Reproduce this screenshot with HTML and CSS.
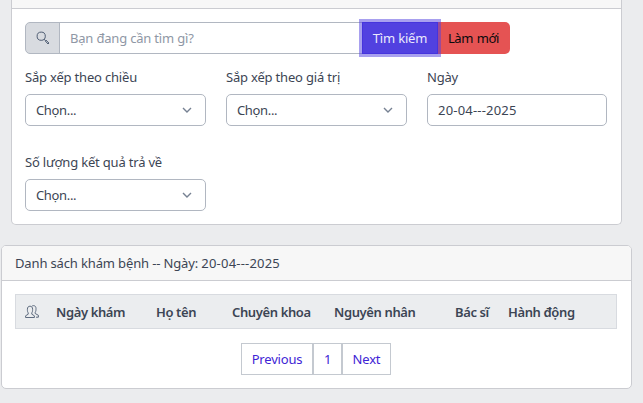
FILE: index.html
```html
<!DOCTYPE html>
<html lang="vi">
<head>
<meta charset="utf-8">
<title>Danh sách khám bệnh</title>
<link rel="stylesheet" href="styles.css">
</head>
<body>
<section class="card filter-card">
  <div class="card-header filter-header"></div>
  <form class="filter-body">
    <div class="search-group">
      <span class="search-addon">
        <svg width="14" height="14" viewBox="0 0 14 14" fill="none" stroke="#4f5d73"><circle cx="5.2" cy="5.2" r="4.1"/><path d="M8.2 8.2l1.2 1.2M9.1 9.8l.8-.8 3 3-.9 1z"/></svg>
      </span>
      <input class="search-input" type="text" placeholder="Bạn đang cần tìm gì?">
      <button class="btn btn-search" type="button"><span>Tìm kiếm</span></button>
      <button class="btn btn-reset" type="button"><span>Làm mới</span></button>
    </div>
    <div class="fields">
      <div class="field">
        <label><span>Sắp xếp theo chiều</span></label>
        <div class="control"><span>Chọn...</span><svg class="chevron" width="10" height="7" viewBox="0 0 10 7"><path d="M1 1l4 4 4-4"/></svg></div>
      </div>
      <div class="field">
        <label><span>Sắp xếp theo giá trị</span></label>
        <div class="control"><span>Chọn...</span><svg class="chevron" width="10" height="7" viewBox="0 0 10 7"><path d="M1 1l4 4 4-4"/></svg></div>
      </div>
      <div class="field">
        <label><span>Ngày</span></label>
        <div class="control"><span class="date">20-04---2025</span></div>
      </div>
      <div class="field">
        <label><span>Số lượng kết quả trả về</span></label>
        <div class="control"><span>Chọn...</span><svg class="chevron" width="10" height="7" viewBox="0 0 10 7"><path d="M1 1l4 4 4-4"/></svg></div>
      </div>
    </div>
  </form>
</section>
<section class="card list-card">
  <div class="card-header list-header"><span>Danh sách khám bệnh -- Ngày: <span class="date">20-04---2025</span></span></div>
  <div class="list-body">
    <div class="table-head">
      <span class="icon-cell"><svg width="14" height="14" viewBox="0 0 14 14" fill="none" stroke="#4f5d73" stroke-width=".9"><path d="M.6 12.500v-1.700l2.600-1.600V7.800C2.500 7 2.400 6 2.400 4.300C2.400 2.200 3.400 1.200 5 1.200S7.600 2.200 7.600 4.300C7.600 6 7.500 7 6.800 7.800v1.400l2.600 1.600v1.700z"/><path d="M7 1.100C8 .3 11 .2 11 3.500c0 1.900-.1 2.900-.8 3.700v1.300l3.200 1.800v1.900H11"/></svg></span>
      <span>Ngày khám</span>
      <span>Họ tên</span>
      <span>Chuyên khoa</span>
      <span>Nguyên nhân</span>
      <span>Bác sĩ</span>
      <span>Hành động</span>
    </div>
    <nav class="pagination">
      <a><span>Previous</span></a><a><span>1</span></a><a><span>Next</span></a>
    </nav>
  </div>
</section>
</body>
</html>
```

FILE: styles.css
```css
* { box-sizing: border-box; }
body {
  margin: 0;
  height: 403px;
  overflow: hidden;
  background: #ebecee;
  color: #3c4554;
  font: 13px/20px "Noto Sans", "Open Sans", sans-serif;
  letter-spacing: -.19px;
}
.card {
  background: #fff;
  border: 1px solid #cbccd1;
  border-radius: 5px;
}
.card-header {
  background: #f7f7f7;
  border-bottom: 1px solid #cbccd1;
}
.filter-card {
  width: 611px;
  height: 225px;
  margin-left: 11px;
  border-top: 0;
  border-radius: 0 0 5px 5px;
}
.filter-header { height: 9px; }
.filter-body { padding: 13px 14px 13px 13px; }
.search-group { display: flex; height: 32px; width: 485px; }
.search-addon {
  display: flex;
  align-items: center;
  justify-content: center;
  width: 35px;
  background: #d8dbe0;
  border: 1px solid #b1b7c1;
  border-radius: 5px 0 0 5px;
}
.search-input {
  flex: 1;
  min-width: 0;
  margin-left: -1px;
  padding: 0 10px;
  border: 1px solid #b1b7c1;
  font: inherit;
  letter-spacing: inherit;
  outline: 0;
}
.search-input::placeholder { color: #8f97a5; opacity: 1; }
.btn { padding: 0; border: 0; font: inherit; letter-spacing: inherit; white-space: nowrap; }
.btn-search {
  position: relative;
  width: 76px;
  margin-left: -1px;
  background: #5141e0;
  border: 1px solid #4534dd;
  color: #ebe9fc;
  box-shadow: 0 0 0 3px rgba(81, 65, 224, .5);
}
.btn-reset {
  width: 73px;
  margin-left: -1px;
  background: #e55353;
  border-radius: 0 5px 5px 0;
  color: #080a0c;
  letter-spacing: -.45px;
  word-spacing: 1px;
}
.fields {
  display: grid;
  grid-template-columns: 181px 181px 180px;
  gap: 20px;
  padding-top: 13px;
}
.field { height: 65px; }
.field label { display: block; height: 27px; white-space: nowrap; }
.control {
  display: flex;
  align-items: center;
  justify-content: space-between;
  height: 32px;
  padding: 0 13px 0 10px;
  border: 1px solid #b1b7c1;
  border-radius: 5px;
  letter-spacing: -.35px;
}
.date { letter-spacing: .2px; }
.chevron { fill: none; stroke: #768192; stroke-width: 1.4; }
.list-card { width: 631px; height: 144px; margin: 20px 0 0 1px; }
.list-header {
  display: flex;
  align-items: center;
  height: 35px;
  padding: 0 13px;
  border-radius: 4px 4px 0 0;
  letter-spacing: -.14px;
}
.list-body { padding: 13px; }
.table-head {
  display: grid;
  grid-template-columns: 31px 100px 76px 102px 121px 53px 1fr;
  align-items: center;
  width: 602px;
  height: 35px;
  padding-left: 9px;
  background: #ebedef;
  border: 1px solid #d8dbe0;
  font-weight: 600;
  letter-spacing: -.38px;
  white-space: nowrap;
}
.icon-cell { display: flex; }
.pagination {
  display: flex;
  width: 150px;
  height: 32px;
  margin: 14px 0 0 226px;
  color: #4024d5;
}
.pagination a {
  display: flex;
  align-items: center;
  justify-content: center;
  border: 1px solid #c4c9d0;
}
.pagination a:nth-child(1) { width: 72px; }
.pagination a:nth-child(2) { width: 29px; }
.pagination a:nth-child(3) { width: 49px; }
```
